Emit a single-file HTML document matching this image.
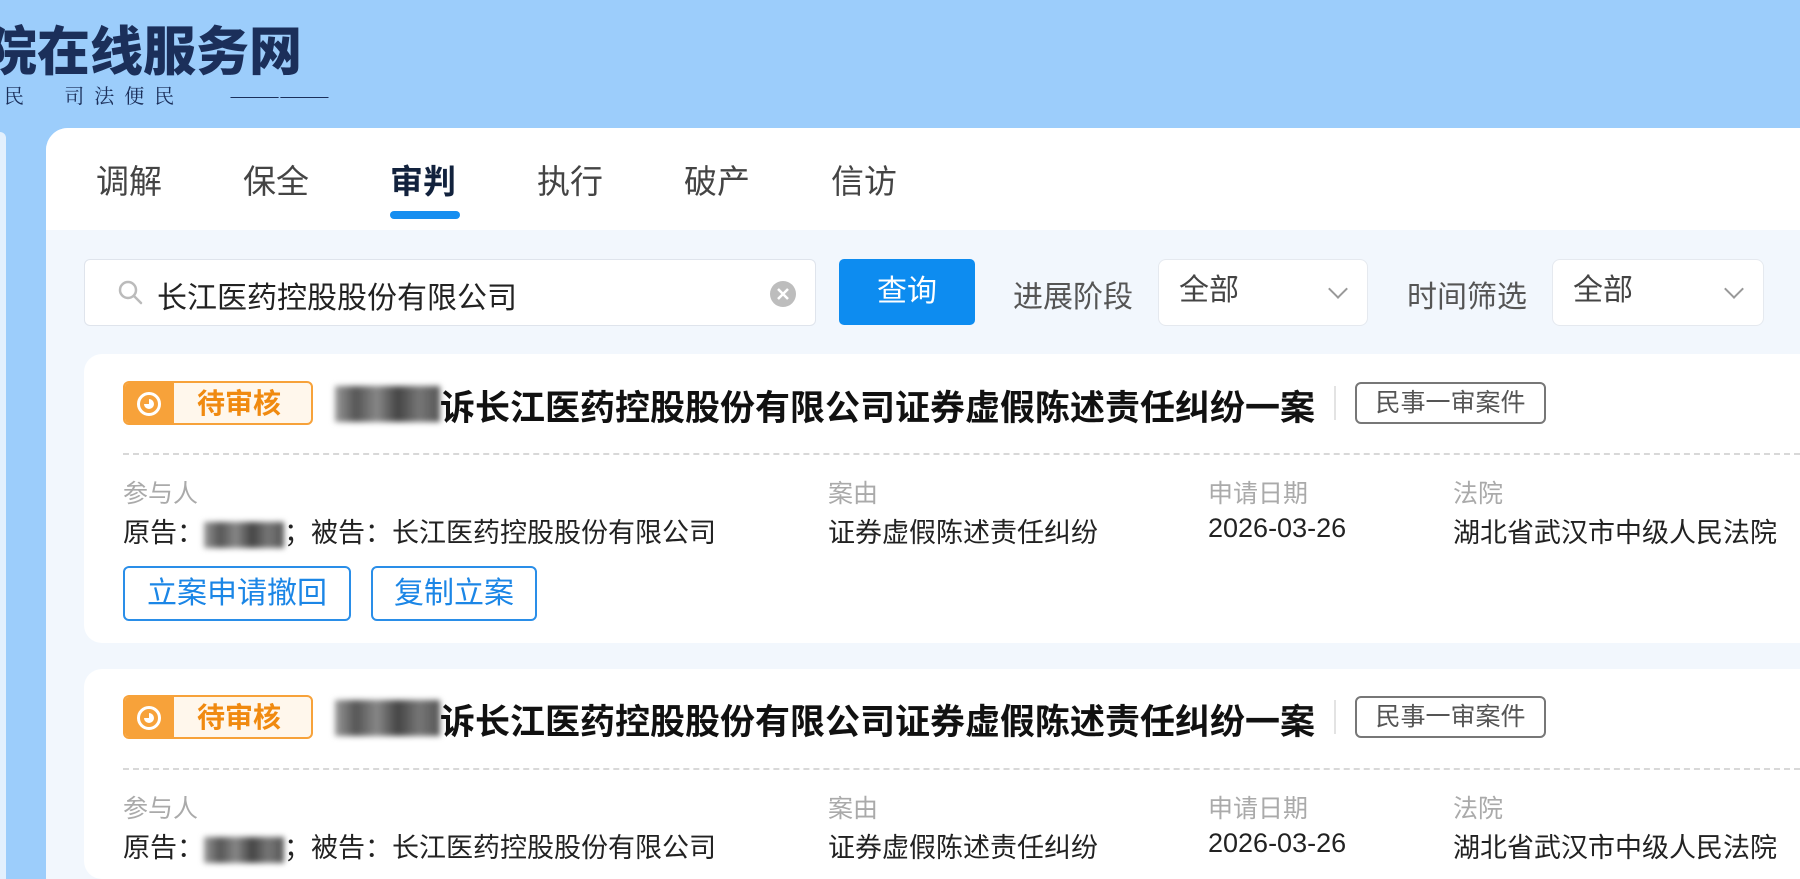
<!DOCTYPE html>
<html><head><meta charset="utf-8"><style>
*{margin:0;padding:0;box-sizing:border-box}
html{overflow:hidden;width:1800px;height:879px}
body{width:1800px;height:879px;overflow:hidden;background:#9ccdfb;font-family:"Liberation Sans","Noto Sans CJK SC",sans-serif;position:relative;color:#222}
.abs{position:absolute}
.logo{left:-16px;top:20px;font-size:53px;font-weight:900;color:#1b2f5a;letter-spacing:0px;white-space:nowrap;line-height:66px}
.sub{left:4px;top:80px;font-size:20px;color:#1b2f5a;font-family:"Noto Serif CJK SC",serif;white-space:nowrap;letter-spacing:10px}
.leftp{left:0;top:132px;width:6px;height:747px;background:#e3f0fd;border-radius:0 14px 0 0}
.main{left:46px;top:128px;width:1754px;height:751px;background:#f2f7fd;border-radius:22px 0 0 0;overflow:hidden}
.tabs{left:0;top:0;width:100%;height:102px;background:#fff}
.tab{top:27px;font-size:33px;color:#444}
.tab.on{font-weight:bold;color:#12223d}
.ul{left:344px;top:83px;width:70px;height:8px;background:#168ef0;border-radius:4px}
.inp{left:38px;top:131px;width:732px;height:67px;background:#fff;border:1px solid #dfe4ec;border-radius:6px}
.btn{left:793px;top:131px;width:136px;height:66px;background:#0d8cf0;color:#fff;font-size:30px;text-align:center;line-height:66px;border-radius:5px}
.lbl{font-size:30px;color:#555;top:144px}
.sel{top:131px;height:67px;background:#fff;border:1px solid #e5e9ef;border-radius:8px;font-size:30px;color:#444;line-height:62px;padding-left:20px}
.chev{position:absolute;right:22px;top:22px;width:14px;height:14px;border-right:2px solid #999;border-bottom:2px solid #999;transform:rotate(45deg)}
.card{left:38px;width:1716px;background:#fff;border-radius:18px 0 0 18px;overflow:hidden}
.badge{left:39px;width:190px;height:44px;border:2px solid #f7a23a;border-radius:6px;background:#fff7ec;overflow:hidden}
.badge .ic{position:absolute;left:0;top:0;width:49px;height:42px;background:#f7a23a}
.badge .ic i{position:absolute;left:12px;top:9px;width:24px;height:24px;border:3px solid #fff;border-radius:50%}
.badge .ic i:after{content:"";position:absolute;left:4px;top:4px;width:10px;height:10px;background:#fff;border-radius:50%;clip-path:polygon(0 50%,50% 50%,50% 0,100% 0,100% 100%,0 100%)}
.badge span{position:absolute;left:72px;top:2px;font-size:28px;color:#f08a10;font-weight:bold;line-height:38px}
.blur{background:linear-gradient(90deg,#999,#555,#888,#444,#777,#555);filter:blur(3px)}
.title{font-size:35px;font-weight:bold;color:#111;white-space:nowrap}
.sep{width:2px;height:34px;background:#e3e3e3}
.tag{width:191px;height:42px;border:2px solid #777;border-radius:6px;font-size:25px;color:#555;text-align:center;line-height:38px}
.dash{left:39px;width:1677px;border-top:2px dashed #d8d8d8}
.k{font-size:25px;color:#aaa;white-space:nowrap}
.v{font-size:27px;color:#222;white-space:nowrap}
.ob{height:55px;border:2px solid #2a8ee8;border-radius:6px;color:#1b86e6;font-size:30px;text-align:center;line-height:51px}
</style></head><body>
<div class="abs logo">院在线服务网</div>
<div class="abs sub">民&nbsp; 司法便民 &nbsp;&nbsp;<span style="letter-spacing:0">——————</span></div>
<div class="abs leftp"></div>
<div class="abs main">
  <div class="abs tabs">
    <div class="abs tab" style="left:50px">调解</div>
    <div class="abs tab" style="left:197px">保全</div>
    <div class="abs tab on" style="left:344px">审判</div>
    <div class="abs tab" style="left:491px">执行</div>
    <div class="abs tab" style="left:638px">破产</div>
    <div class="abs tab" style="left:785px">信访</div>
    <div class="abs ul"></div>
  </div>
  <div class="abs inp">
    <svg class="abs" style="left:32px;top:19px" width="28" height="28" viewBox="0 0 28 28"><circle cx="11" cy="11" r="8" fill="none" stroke="#bbb" stroke-width="2.5"/><line x1="17" y1="17" x2="24" y2="24" stroke="#bbb" stroke-width="2.5" stroke-linecap="round"/></svg>
    <div class="abs" style="left:72px;top:13px;font-size:30px;color:#222">长江医药控股股份有限公司</div>
    <svg class="abs" style="left:684px;top:20px" width="28" height="28" viewBox="0 0 28 28"><circle cx="14" cy="14" r="13" fill="#bdbdbd"/><path d="M9 9L19 19M19 9L9 19" stroke="#fff" stroke-width="2.5"/></svg>
  </div>
  <div class="abs btn">查询</div>
  <div class="abs lbl" style="left:967px">进展阶段</div>
  <div class="abs sel" style="left:1112px;width:210px">全部<div class="chev"></div></div>
  <div class="abs lbl" style="left:1361px">时间筛选</div>
  <div class="abs sel" style="left:1506px;width:212px">全部<div class="chev"></div></div>

  <div class="abs card" style="top:226px;height:289px">
    <div class="abs badge" style="top:27px"><div class="ic"><i></i></div><span>待审核</span></div>
    <div class="abs blur" style="left:251px;top:32px;width:105px;height:36px"></div>
    <div class="abs title" style="left:356px;top:26px">诉长江医药控股股份有限公司证券虚假陈述责任纠纷一案</div>
    <div class="abs sep" style="left:1250px;top:32px"></div>
    <div class="abs tag" style="left:1271px;top:28px">民事一审案件</div>
    <div class="abs dash" style="top:99px"></div>
    <div class="abs k" style="left:39px;top:120px">参与人</div>
    <div class="abs v" style="left:39px;top:157px">原告：<span style="display:inline-block;width:80px;height:26px;vertical-align:middle" class="blur"></span>；被告：长江医药控股股份有限公司</div>
    <div class="abs k" style="left:744px;top:120px">案由</div>
    <div class="abs v" style="left:744px;top:157px">证券虚假陈述责任纠纷</div>
    <div class="abs k" style="left:1124px;top:120px">申请日期</div>
    <div class="abs v" style="left:1124px;top:159px">2026-03-26</div>
    <div class="abs k" style="left:1369px;top:120px">法院</div>
    <div class="abs v" style="left:1369px;top:157px">湖北省武汉市中级人民法院</div>
    <div class="abs ob" style="left:39px;top:212px;width:228px">立案申请撤回</div>
    <div class="abs ob" style="left:287px;top:212px;width:166px">复制立案</div>
  </div>

  <div class="abs card" style="top:541px;height:210px">
    <div class="abs badge" style="top:26px"><div class="ic"><i></i></div><span>待审核</span></div>
    <div class="abs blur" style="left:251px;top:31px;width:105px;height:36px"></div>
    <div class="abs title" style="left:356px;top:25px">诉长江医药控股股份有限公司证券虚假陈述责任纠纷一案</div>
    <div class="abs sep" style="left:1250px;top:31px"></div>
    <div class="abs tag" style="left:1271px;top:27px">民事一审案件</div>
    <div class="abs dash" style="top:99px"></div>
    <div class="abs k" style="left:39px;top:120px">参与人</div>
    <div class="abs v" style="left:39px;top:157px">原告：<span style="display:inline-block;width:80px;height:26px;vertical-align:middle" class="blur"></span>；被告：长江医药控股股份有限公司</div>
    <div class="abs k" style="left:744px;top:120px">案由</div>
    <div class="abs v" style="left:744px;top:157px">证券虚假陈述责任纠纷</div>
    <div class="abs k" style="left:1124px;top:120px">申请日期</div>
    <div class="abs v" style="left:1124px;top:159px">2026-03-26</div>
    <div class="abs k" style="left:1369px;top:120px">法院</div>
    <div class="abs v" style="left:1369px;top:157px">湖北省武汉市中级人民法院</div>
  </div>
</div>
</body></html>
